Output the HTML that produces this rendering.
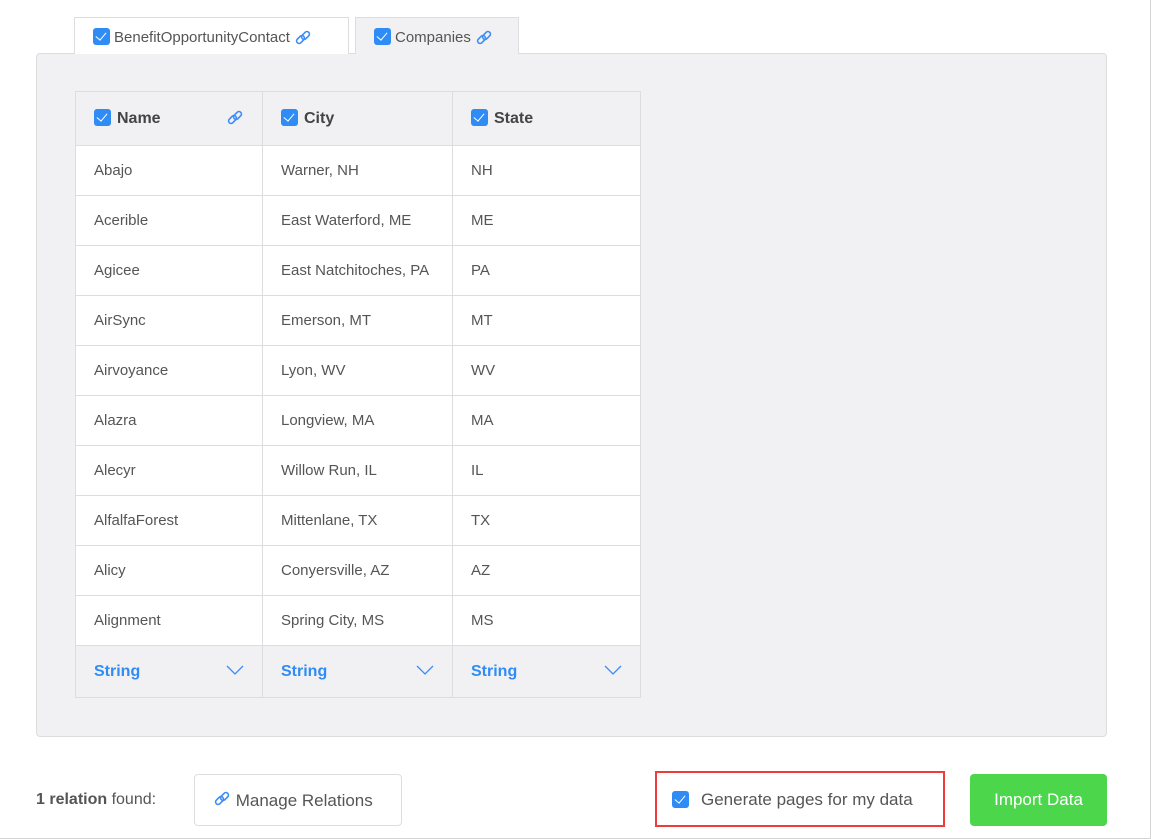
<!DOCTYPE html>
<html><head><style>
*{box-sizing:border-box;margin:0;padding:0}
body{width:1151px;height:839px;background:#fff;font-family:"Liberation Sans",sans-serif;color:#555;position:relative;overflow:hidden;border-right:1px solid #d4d4d4;border-bottom:1px solid #d4d4d4}
.cb{display:inline-block;width:17px;height:17px;background:#2f8cf5;border-radius:3px;position:relative;vertical-align:middle}
.cb:after{content:"";position:absolute;left:5px;top:2px;width:5px;height:9px;border:solid #fff;border-width:0 1.6px 1.6px 0;transform:rotate(40deg)}
.tab{position:absolute;top:17px;height:37px;border:1px solid #ddd;border-bottom:none;font-size:15px;color:#555;padding:11px 0 0 18px;background:#fff}
.tab .cb{margin-right:4px;margin-top:-3px}
.panel{position:absolute;left:36px;top:53px;width:1071px;height:684px;background:#f1f1f3;border:1px solid #ddd;border-radius:4px}
table{position:absolute;left:75px;top:91px;border-collapse:collapse;font-size:15px;table-layout:fixed;width:565px}
td{border:1px solid #ddd;background:#fff;height:50px;padding-left:18px;color:#555}
th{border:1px solid #ddd;background:#f1f1f3;height:54px;text-align:left;padding-left:18px;font-size:16px;color:#444;position:relative}
th .cb{margin-right:6px;margin-top:-2px}
.ft td{background:#f1f1f3;height:52px;color:#2f8cf5;font-weight:bold;font-size:16px;position:relative}
.chev{position:absolute;right:18px;top:18px}
.link{vertical-align:middle}
</style></head><body>
<div class="panel"></div>
<div class="tab" style="left:74px;width:275px"><span class="cb"></span>BenefitOpportunityContact <svg class="link" width="18" height="18" viewBox="0 0 18 18" fill="none" stroke="#3d8cf5" stroke-width="1.6"><rect x="2" y="8" width="9" height="5" rx="2.5" transform="rotate(-45 6.5 10.5)"/><rect x="7" y="4" width="9" height="5" rx="2.5" transform="rotate(-45 11.5 6.5)"/></svg></div>
<div class="tab" style="left:355px;width:164px;background:#f1f1f3;height:37px"><span class="cb"></span>Companies <svg class="link" width="18" height="18" viewBox="0 0 18 18" fill="none" stroke="#3d8cf5" stroke-width="1.6"><rect x="2" y="8" width="9" height="5" rx="2.5" transform="rotate(-45 6.5 10.5)"/><rect x="7" y="4" width="9" height="5" rx="2.5" transform="rotate(-45 11.5 6.5)"/></svg></div>
<table>
<colgroup><col style="width:187px"><col style="width:190px"><col style="width:188px"></colgroup>
<tr><th><span class="cb"></span>Name<svg style="position:absolute;right:18px;top:17px" width="18" height="18" viewBox="0 0 18 18" fill="none" stroke="#3d8cf5" stroke-width="1.6"><rect x="2" y="8" width="9" height="5" rx="2.5" transform="rotate(-45 6.5 10.5)"/><rect x="7" y="4" width="9" height="5" rx="2.5" transform="rotate(-45 11.5 6.5)"/></svg></th><th><span class="cb"></span>City</th><th><span class="cb"></span>State</th></tr>
<tr><td>Abajo</td><td>Warner, NH</td><td>NH</td></tr>
<tr><td>Acerible</td><td>East Waterford, ME</td><td>ME</td></tr>
<tr><td>Agicee</td><td>East Natchitoches, PA</td><td>PA</td></tr>
<tr><td>AirSync</td><td>Emerson, MT</td><td>MT</td></tr>
<tr><td>Airvoyance</td><td>Lyon, WV</td><td>WV</td></tr>
<tr><td>Alazra</td><td>Longview, MA</td><td>MA</td></tr>
<tr><td>Alecyr</td><td>Willow Run, IL</td><td>IL</td></tr>
<tr><td>AlfalfaForest</td><td>Mittenlane, TX</td><td>TX</td></tr>
<tr><td>Alicy</td><td>Conyersville, AZ</td><td>AZ</td></tr>
<tr><td>Alignment</td><td>Spring City, MS</td><td>MS</td></tr>
<tr class="ft"><td>String<svg class="chev" width="18" height="12" viewBox="0 0 18 12" fill="none" stroke="#3d8cf5" stroke-width="1.3"><path d="M1 2l8 8 8-8"/></svg></td><td>String<svg class="chev" width="18" height="12" viewBox="0 0 18 12" fill="none" stroke="#3d8cf5" stroke-width="1.3"><path d="M1 2l8 8 8-8"/></svg></td><td>String<svg class="chev" width="18" height="12" viewBox="0 0 18 12" fill="none" stroke="#3d8cf5" stroke-width="1.3"><path d="M1 2l8 8 8-8"/></svg></td></tr>
</table>
<div style="position:absolute;left:36px;top:791px;font-size:16px;color:#555"><b>1 relation</b> found:</div>
<div style="position:absolute;left:194px;top:774px;width:208px;height:52px;border:1px solid #ddd;border-radius:4px;font-size:17px;color:#555;padding:15px 0 0 18px"><svg style="vertical-align:-2px" width="18" height="18" viewBox="0 0 18 18" fill="none" stroke="#3d8cf5" stroke-width="1.6"><rect x="2" y="8" width="9" height="5" rx="2.5" transform="rotate(-45 6.5 10.5)"/><rect x="7" y="4" width="9" height="5" rx="2.5" transform="rotate(-45 11.5 6.5)"/></svg> Manage Relations</div>
<div style="position:absolute;left:655px;top:771px;width:290px;height:56px;border:2px solid #ee3b3b;font-size:17px;color:#555;padding:17px 0 0 15px"><span class="cb" style="margin-right:12px;margin-top:-3px"></span>Generate pages for my data</div>
<div style="position:absolute;left:970px;top:774px;width:137px;height:52px;background:#4cd64c;border-radius:4px;color:#fff;font-size:17px;text-align:center;line-height:52px">Import Data</div>
</body></html>
